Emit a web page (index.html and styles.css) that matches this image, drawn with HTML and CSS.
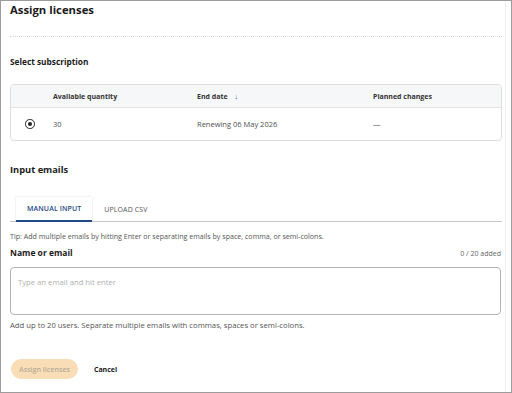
FILE: index.html
```html
<!DOCTYPE html>
<html>
<head>
<meta charset="utf-8">
<link rel="stylesheet" href="styles.css">
</head>
<body>
<div class="frame">
  <div class="content">
    <h1 class="title">Assign licenses</h1>
    <div class="dots"></div>
    <h2 class="section">Select subscription</h2>
    <div class="table">
      <div class="thead">
        <div class="c-radio"></div>
        <div class="c-qty">Available quantity</div>
        <div class="c-date">End date <span class="arrow">↓</span></div>
        <div class="c-plan">Planned changes</div>
      </div>
      <div class="trow">
        <div class="c-radio"><span class="radio"></span></div>
        <div class="c-qty">30</div>
        <div class="c-date">Renewing 06 May 2026</div>
        <div class="c-plan">—</div>
      </div>
    </div>
    <h2 class="section emails">Input emails</h2>
    <div class="tabs">
      <div class="tab active">MANUAL INPUT</div>
      <div class="tab">UPLOAD CSV</div>
    </div>
    <p class="tip">Tip: Add multiple emails by hitting Enter or separating emails by space, comma, or semi-colons.</p>
    <div class="label-row">
      <span class="label">Name or email</span>
      <span class="count">0 / 20 added</span>
    </div>
    <div class="input">Type an email and hit enter</div>
    <p class="help">Add up to 20 users. Separate multiple emails with commas, spaces or semi-colons.</p>
    <div class="actions">
      <button class="primary">Assign licenses</button>
      <button class="cancel">Cancel</button>
    </div>
  </div>
</div>
</body>
</html>
```
FILE: styles.css
```css
* { box-sizing: border-box; }
html, body { margin: 0; padding: 0; }
body {
  font-family: "Open Sans", "Noto Sans", sans-serif;
  color: #1b1b1b;
  background: #fff;
}
.frame {
  width: 512px;
  height: 393px;
  border: 1px solid #9c9c9c;
  padding: 0 5px 0 0;
  overflow: hidden;
}
.content {
  height: 100%;
  border-right: 1px solid #f0f0f0;
  padding: 0 3px 0 9px;
}
.title {
  margin: 0;
  font-size: 11.3px;
  font-weight: 700;
  line-height: 18px;
}
.dots {
  margin-top: 17px;
  border-top: 1px dotted #d6d6d6;
}
.section {
  margin: 19px 0 0 0;
  font-size: 8.3px;
  font-weight: 700;
  line-height: 12px;
}
.table {
  margin-top: 16px;
  border: 1px solid #dedede;
  border-radius: 4px;
  font-size: 7px;
  overflow: hidden;
}
.thead, .trow {
  display: grid;
  grid-template-columns: 42px 144px 176px 1fr;
  align-items: center;
}
.thead {
  height: 23px;
  background: #f6f7f8;
  border-bottom: 1px solid #e2e2e2;
  font-weight: 700;
  color: #333;
}
.trow {
  height: 32px;
  color: #505050;
  font-size: 7.5px;
}
.arrow { color: #2a5aa8; font-weight: 400; margin-left: 5px; }
.c-radio { display: flex; padding-left: 14px; }
.radio {
  width: 9.5px; height: 9.5px;
  border: 1.3px solid #222;
  border-radius: 50%;
  display: flex; align-items: center; justify-content: center;
}
.radio::after {
  content: "";
  width: 4.5px; height: 4.5px;
  background: #222; border-radius: 50%;
}
.emails {
  margin-top: 22px;
  font-size: 9.3px;
  line-height: 13px;
}
.tabs {
  margin-top: 21px;
  display: flex;
  border-bottom: 1px solid #c8c8c8;
  height: 25px;
}
.tab {
  font-size: 7px;
  letter-spacing: 0.1px;
  color: #555;
  display: flex;
  align-items: center;
  padding: 0 11px 0 12px;
}
.tab.active {
  margin-left: 6px;
  padding: 0 11px;
  color: #1f4a86;
  font-weight: 600;
  border-bottom: 2px solid #1f4a86;
  box-shadow: 0 -1px 2px rgba(0,0,0,0.05), 1px 0 1px rgba(0,0,0,0.03), -1px 0 1px rgba(0,0,0,0.03);
  margin-bottom: -1px;
}
.tip {
  margin: 9px 0 0 0;
  font-size: 7.1px;
  line-height: 10px;
  color: #555;
}
.label-row {
  margin-top: 6px;
  display: flex;
  justify-content: space-between;
  align-items: baseline;
  padding-right: 1px;
  line-height: 12px;
}
.label { font-size: 8.5px; font-weight: 700; }
.count { font-size: 7px; color: #666; }
.input {
  margin-top: 7px;
  height: 48px;
  border: 1px solid #b4b4b4;
  border-radius: 4px;
  padding: 9px 7px;
  font-size: 7.7px;
  line-height: 11px;
  color: #b0b0b0;
  margin-right: 1px;
}
.help {
  margin: 5px 0 0 0;
  font-size: 7.7px;
  line-height: 11px;
  color: #555;
}
.actions {
  margin-top: 28px;
  display: flex;
  align-items: center;
  gap: 16px;
}
button {
  font-family: inherit;
  border: none;
  background: none;
  padding: 0;
}
.primary {
  background: #f9ddb6;
  color: #b9ab98;
  font-size: 7.1px;
  font-weight: 600;
  height: 20px;
  padding: 0 8px;
  border-radius: 10px;
  margin-left: 1px;
}
.cancel {
  font-size: 7px;
  font-weight: 700;
  color: #222;
}
```
